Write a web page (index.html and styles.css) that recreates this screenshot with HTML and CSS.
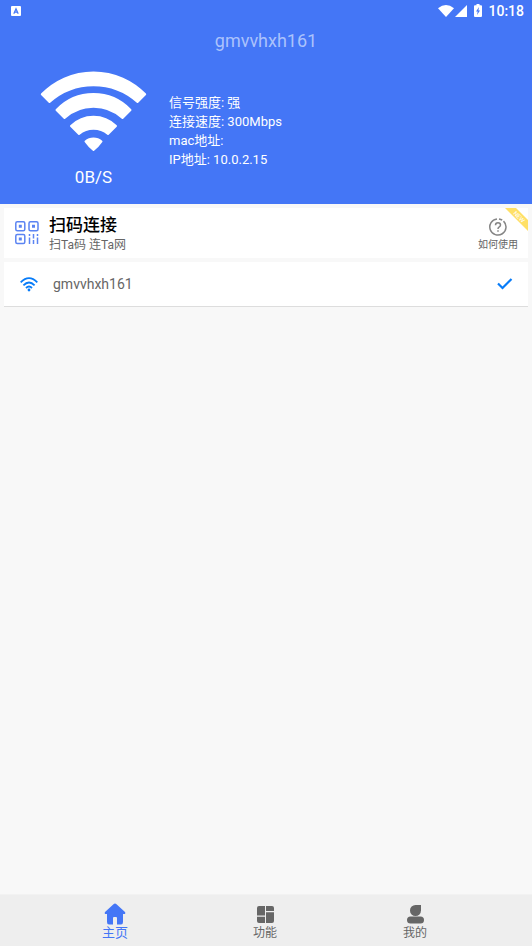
FILE: index.html
```html
<!DOCTYPE html>
<html lang="zh-CN">
<head>
<meta charset="utf-8">
<meta name="viewport" content="width=device-width, initial-scale=1">
<title>WiFi</title>
<link rel="stylesheet" href="styles.css">
</head>
<body>
<header class="hero">
  <div class="status">
    <svg class="status-app" width="10" height="10" viewBox="0 0 10 10"><rect width="10" height="10" rx="1" fill="#fff"/><path d="M2.800 7.800 5 2.800 7.200 7.800M3.700 6.200h2.600" fill="none" stroke="#4476f6" stroke-width="1.200"/></svg>
    <svg width="16" height="12" viewBox="0 0 16 12"><path d="M0 3.200Q8-3 16 3.200L8 12Z" fill="#fff"/></svg>
    <svg class="status-signal" width="12" height="12" viewBox="0 0 12 12"><path d="M12 0v12H0Z" fill="#fff"/></svg>
    <svg class="status-battery" width="8" height="13" viewBox="0 0 8 13"><path d="M2.500 0h3v1.200H7q1 0 1 1V12q0 1-1 1H1q-1 0-1-1V2.200q0-1 1-1h1.500Z" fill="#fff"/><path d="M5 3 2 7.500h1.700L3 11l3-4.500H4.400Z" fill="#4476f6"/></svg>
    <time class="clock">10:18</time>
  </div>
  <h1 class="title">gmvvhxh161</h1>
  <div class="summary">
    <div class="meter">
      <svg width="107" height="81" viewBox="0 0 107 81" fill="#fff" stroke="#fff" stroke-width="2" stroke-linejoin="round">
        <path d="M1.800 23.300A72 72 0 0 1 105.200 23.300L97.500 31A66 66 0 0 0 9.500 31Z"/>
        <path d="M16.500 39A51 51 0 0 1 90.500 39L82.500 47A43 43 0 0 0 24.500 47Z"/>
        <path d="M31 55A32 32 0 0 1 76 55L68 63A23 23 0 0 0 39 63Z"/>
        <path d="M45.500 70.500A12 12 0 0 1 61.500 70.500Q58 75.500 53.500 79Q49 75.500 45.500 70.500Z"/>
      </svg>
      <span class="speed">0B/S</span>
    </div>
    <ul class="details">
      <li>信号强度: 强</li>
      <li>连接速度: 300Mbps</li>
      <li>mac地址:</li>
      <li>IP地址: 10.0.2.15</li>
    </ul>
  </div>
</header>
<main class="content">
  <section class="card scan">
    <a class="scan-link" href="#scan">
      <svg width="24" height="24" viewBox="0 0 24 24" fill="none" stroke="#5b84f2" stroke-width="1.500"><rect x=".8" y=".8" width="9" height="9" rx="1.500"/><rect x="14" y=".8" width="9" height="9" rx="1.500"/><rect x=".8" y="13.500" width="9" height="9" rx="1.500"/><path d="M3.800 5.300h3M17 5.300h3M3.800 18h3" stroke-width="3"/><path d="M14.500 13v2M14.500 16.500v6.500M18.500 13v4.500M18.500 19v4M22.500 13v2M22.500 16.500v6.500"/></svg>
      <span class="scan-text"><strong>扫码连接</strong><span class="hint">扫Ta码 连Ta网</span></span>
    </a>
    <a class="help" href="#help">
      <svg width="18" height="18" viewBox="0 0 18 18" fill="none" stroke="#858585" stroke-width="1.500"><path d="M8 .9A8.100 8.100 0 1 0 14.500 3.100M10 .9Q12 1.200 13.200 2.100"/><path d="M6.500 7.200Q6.500 4.700 9 4.700T11.500 7Q11.500 8.300 10 9.200Q9 9.800 9 11M9 12.300v1.500"/></svg>
      <span>如何使用</span>
    </a>
    <svg class="ribbon" width="23" height="23" viewBox="0 0 23 23"><path d="M0 0h11L23 12v11Z" fill="#ffe066"/><text class="ribbon-text" x="14" y="11" transform="rotate(45 14 9)">NEW</text></svg>
  </section>
  <a class="card network" href="#network">
    <svg width="18" height="15" viewBox="0 0 18 15" fill="none" stroke="#087cf8" stroke-width="1.800"><path d="M.7 5.300Q9-3 17.300 5.300M3.400 8.300Q9 2.700 14.600 8.300M6 11Q9 8 12 11"/><circle cx="9" cy="13" r="1.400" fill="#087cf8" stroke="none"/></svg>
    <span class="network-name">gmvvhxh161</span>
    <svg width="16" height="12" viewBox="0 0 16 12"><path d="M1 5.500 5.500 10 14.500 1" fill="none" stroke="#087cf8" stroke-width="2.200"/></svg>
  </a>
</main>
<nav class="tabs">
  <a class="tab active" href="#home"><svg width="22" height="22" viewBox="0 0 22 22"><path d="M9.500 1.200Q11 0 12.500 1.200L21 9Q22 11 20 11H19V19Q19 21.500 17 21.500H13V15q0-1-1-1h-2q-1 0-1 1v6.500H5Q3 21.500 3 19V11H2Q0 11 1 9Z" fill="currentColor"/></svg><span>主页</span></a>
  <a class="tab" href="#tools"><svg width="22" height="22" viewBox="0 0 22 22" fill="currentColor"><path d="M5 3h6v9.500H3V5q0-2 2-2ZM12 3h6q2 0 2 2v3h-8ZM12 9.200h8V18q0 2-2 2h-6ZM3 13.700h8V20H5q-2 0-2-2Z"/></svg><span>功能</span></a>
  <a class="tab" href="#me"><svg width="22" height="22" viewBox="0 0 22 22" fill="currentColor"><path d="M17 2V7.500A5.500 5.500 0 1 1 11.500 2Z"/><rect x="3" y="13.500" width="17" height="7" rx="3.500"/></svg><span>我的</span></a>
</nav>
</body>
</html>
```
FILE: styles.css
```css
* {
  box-sizing: border-box;
}

body {
  margin: 0;
  min-height: 100vh;
  display: flex;
  flex-direction: column;
  background: #f8f8f8;
  color: #666;
  font-family: Roboto, "Noto Sans CJK SC", sans-serif;
}

a {
  color: inherit;
  text-decoration: none;
}

svg {
  display: block;
  flex: none;
}

.hero {
  background: #4476f6;
  color: #fff;
  padding-bottom: 16px;
}

.status {
  display: flex;
  align-items: center;
  height: 22px;
  padding: 0 8px 0 11px;
}

.status-app {
  margin-right: auto;
}

.status-signal {
  margin-left: 1px;
}

.status-battery {
  margin: 0 6px 2px 7px;
}

.clock {
  font-size: 14px;
  font-weight: 500;
}

.title {
  margin: 8px 0 19px;
  font-size: 18px;
  line-height: 22px;
  font-weight: 400;
  text-align: center;
  color: #abc2fc;
}

.summary {
  display: flex;
  align-items: flex-start;
  gap: 22px;
  padding-left: 40px;
}

.meter {
  display: flex;
  flex-direction: column;
  align-items: center;
  gap: 14px;
}

.speed {
  font-size: 17px;
  line-height: 22px;
}

.details {
  list-style: none;
  margin: 22px 0 0;
  padding: 0;
  font-size: 13px;
  line-height: 19px;
}

.content {
  flex: 1;
  display: flex;
  flex-direction: column;
  gap: 4px;
  padding: 4px;
}

.card {
  display: flex;
  align-items: center;
  background: #fff;
}

.scan {
  position: relative;
  justify-content: space-between;
  height: 50px;
  padding: 0 10px 0 11px;
}

.scan-link {
  display: flex;
  align-items: center;
  gap: 10px;
}

.scan-text {
  display: flex;
  flex-direction: column;
  padding-top: 2px;
}

.scan-text strong {
  color: #000;
  font-size: 17px;
  line-height: 22px;
  font-weight: 500;
}

.hint {
  font-size: 12px;
  line-height: 18px;
}

.help {
  display: flex;
  flex-direction: column;
  align-items: center;
  gap: 1px;
  padding-top: 4px;
  font-size: 10px;
  line-height: 16px;
}

.ribbon {
  position: absolute;
  top: 0;
  right: 0;
}

.ribbon-text {
  fill: #fff;
  font-size: 6px;
  text-anchor: middle;
}

.network {
  height: 45px;
  padding: 0 15px 0 16px;
  border-bottom: 1px solid #ddd;
}

.network-name {
  flex: 1;
  margin-left: 15px;
  font-size: 14px;
}

.tabs {
  display: flex;
  height: 52px;
  padding: 8px 42px 0 40px;
  background: #eee;
  border-top: 1px solid #f2f2f2;
}

.tab {
  flex: 1;
  display: flex;
  flex-direction: column;
  align-items: center;
  font-size: 12px;
  line-height: 16px;
}

.tab.active {
  color: #4476f6;
  font-size: 13px;
}
```
